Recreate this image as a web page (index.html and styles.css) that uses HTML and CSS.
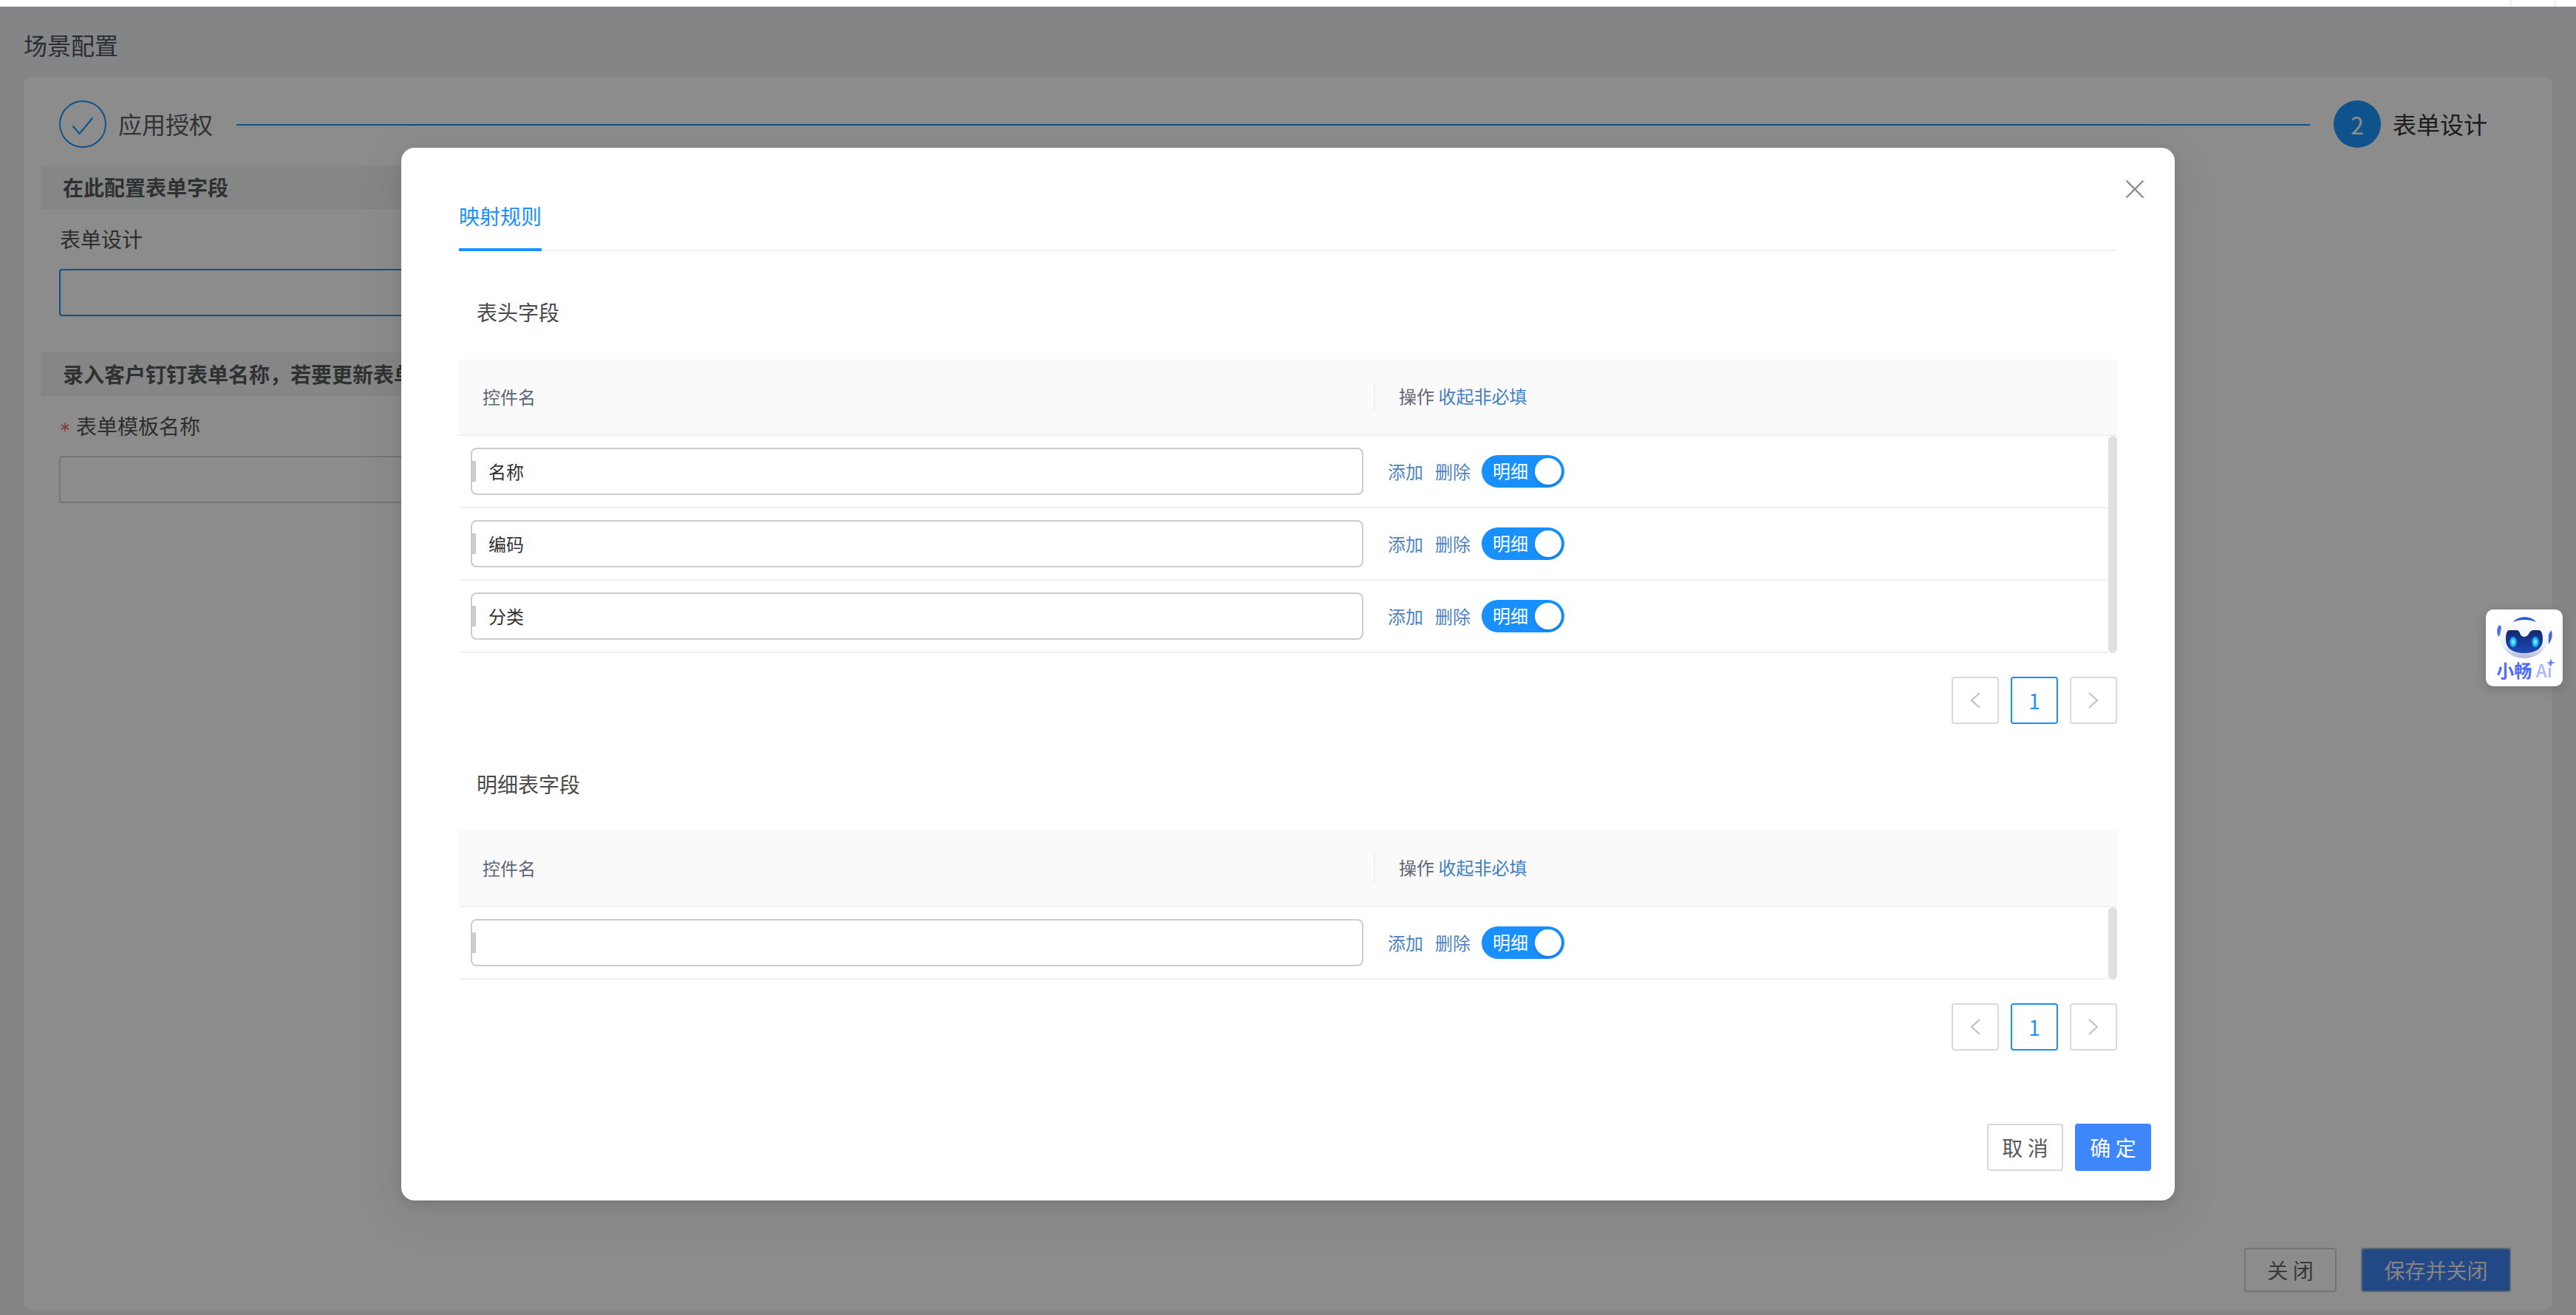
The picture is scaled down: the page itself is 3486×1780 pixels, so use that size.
FILE: index.html
```html
<!DOCTYPE html>
<html lang="zh-CN">
<head>
<meta charset="utf-8">
<title>场景配置</title>
<link rel="stylesheet" href="styles.css">
</head>
<body>
<div class="topbar"><span class="topcell"></span><span class="topcell last"></span></div>
<div class="app">
  <h1 class="page-title">场景配置</h1>
  <div class="panel">
    <div class="steps">
      <span class="step-icon">
        <svg width="30" height="25" viewBox="0 0 30 25"><path d="M1.5 12.5 L10.5 23 L28.5 1.5" fill="none" stroke="currentColor" stroke-width="2.2"/></svg>
      </span>
      <span class="step-text">应用授权</span>
      <span class="step-line"></span>
      <span class="step-num">2</span>
      <span class="step-text dark">表单设计</span>
    </div>
    <div class="strip first">在此配置表单字段</div>
    <div class="label">表单设计</div>
    <div class="field active"></div>
    <div class="strip second">录入客户钉钉表单名称，若要更新表单模板请重新录入</div>
    <div class="label req">
      <svg class="star" width="14" height="14" viewBox="0 0 14 14"><path d="M7 1 V13 M1.8 4 L12.2 10 M12.2 4 L1.8 10" stroke="#f56c6c" stroke-width="1.5" fill="none"/></svg>
      <span>表单模板名称</span>
    </div>
    <div class="field second-field"></div>
    <div class="panel-foot">
      <button class="pbtn">关 闭</button>
      <button class="pbtn primary">保存并关闭</button>
    </div>
  </div>

  <div class="mask"></div>

  <div class="modal">
    <svg class="close" width="26" height="26" viewBox="0 0 26 26"><path d="M1.5 1.5 L24.5 24.5 M24.5 1.5 L1.5 24.5" stroke="#8c8c8c" stroke-width="2.4" fill="none"/></svg>
    <div class="tabs"><span class="tab">映射规则</span></div>

    <div class="sec-title t1">表头字段</div>
    <div class="table">
      <div class="thead">
        <div class="th-name">控件名</div>
        <div class="th-act">操作 <span class="link">收起非必填</span></div>
      </div>
      <div class="tbody">
        <div class="rows">
          <div class="row">
            <div class="cell-name"><div class="inp"><i class="grip"></i>名称</div></div>
            <div class="cell-act"><span class="act">添加</span><span class="act">删除</span><span class="switch"><span class="sw-text">明细</span><i class="knob"></i></span></div>
          </div>
          <div class="row">
            <div class="cell-name"><div class="inp"><i class="grip"></i>编码</div></div>
            <div class="cell-act"><span class="act">添加</span><span class="act">删除</span><span class="switch"><span class="sw-text">明细</span><i class="knob"></i></span></div>
          </div>
          <div class="row">
            <div class="cell-name"><div class="inp"><i class="grip"></i>分类</div></div>
            <div class="cell-act"><span class="act">添加</span><span class="act">删除</span><span class="switch"><span class="sw-text">明细</span><i class="knob"></i></span></div>
          </div>
        </div>
        <div class="scroll"></div>
      </div>
    </div>
    <div class="pager">
      <span class="pg"><svg width="14" height="22" viewBox="0 0 14 22"><path d="M13 1 L2 11 L13 21" fill="none" stroke="#bfbfbf" stroke-width="2"/></svg></span>
      <span class="pg on">1</span>
      <span class="pg"><svg width="14" height="22" viewBox="0 0 14 22"><path d="M1 1 L12 11 L1 21" fill="none" stroke="#bfbfbf" stroke-width="2"/></svg></span>
    </div>

    <div class="sec-title t2">明细表字段</div>
    <div class="table">
      <div class="thead">
        <div class="th-name">控件名</div>
        <div class="th-act">操作 <span class="link">收起非必填</span></div>
      </div>
      <div class="tbody">
        <div class="rows">
          <div class="row">
            <div class="cell-name"><div class="inp"><i class="grip"></i></div></div>
            <div class="cell-act"><span class="act">添加</span><span class="act">删除</span><span class="switch"><span class="sw-text">明细</span><i class="knob"></i></span></div>
          </div>
        </div>
        <div class="scroll"></div>
      </div>
    </div>
    <div class="pager">
      <span class="pg"><svg width="14" height="22" viewBox="0 0 14 22"><path d="M13 1 L2 11 L13 21" fill="none" stroke="#bfbfbf" stroke-width="2"/></svg></span>
      <span class="pg on">1</span>
      <span class="pg"><svg width="14" height="22" viewBox="0 0 14 22"><path d="M1 1 L12 11 L1 21" fill="none" stroke="#bfbfbf" stroke-width="2"/></svg></span>
    </div>

    <div class="modal-foot">
      <button class="mbtn">取 消</button>
      <button class="mbtn ok">确 定</button>
    </div>
  </div>

  <div class="ai">
    <svg class="robot" width="104" height="66" viewBox="0 0 104 66">
      <defs>
        <linearGradient id="head" x1="0" y1="0" x2="0" y2="1"><stop offset="0" stop-color="#ffffff"/><stop offset=".7" stop-color="#eef1fb"/><stop offset="1" stop-color="#aeb6d6"/></linearGradient>
        <linearGradient id="visor" x1="0" y1="0" x2="0" y2="1"><stop offset="0" stop-color="#14296e"/><stop offset="1" stop-color="#1d49b8"/></linearGradient>
        <radialGradient id="eye"><stop offset="0" stop-color="#a8f6ff"/><stop offset=".6" stop-color="#1cc4f5"/><stop offset="1" stop-color="#1279d8"/></radialGradient>
      </defs>
      <path d="M18 21 C15 25 14 31 17 37 L20 33 L21 23 Z" fill="#4a74e8"/>
      <path d="M88 28 C91 33 90 40 85 47 L84 36 Z" fill="#3f68e0"/>
      <ellipse cx="52" cy="37" rx="33" ry="29" fill="url(#head)"/>
      <path d="M37 17 C43 8 62 8 68 17 C60 13 45 13 37 17 Z" fill="#2c5ad8"/>
      <path d="M32 28 H42 C47 28 45 37 52 37 C59 37 58 28 64 28 H71 C76 28 77 34 77 41 C77 52 68 59 52 59 C36 59 27 52 27 41 C27 34 28 28 32 28 Z" fill="url(#visor)"/>
      <ellipse cx="37" cy="44" rx="5" ry="7.5" fill="url(#eye)"/>
      <ellipse cx="67" cy="44" rx="5" ry="7.5" fill="url(#eye)"/>
    </svg>
    <div class="ai-text">小畅 <span>Ai</span></div>
    <svg class="ai-star" width="12" height="12" viewBox="0 0 12 12"><path d="M6 0 L7.3 4.7 L12 6 L7.3 7.3 L6 12 L4.7 7.3 L0 6 L4.7 4.7 Z" fill="#5a7cf5"/></svg>
  </div>
</div>
</body>
</html>
```

FILE: styles.css
```css
* { box-sizing: border-box; }
html, body { margin: 0; padding: 0; height: 1780px; overflow: hidden; }
body {
  width: 3486px;
  background: #fff;
  font-family: "Noto Sans CJK SC", "Noto Sans", sans-serif;
  color: #333;
}
.topbar { height: 9px; display: flex; justify-content: flex-end; background: #fff; }
.topcell { width: 60px; border-left: 2px solid #f0f0f0; }
.topcell.last { width: 29px; }

.app {
  position: relative;
  height: 1771px;
  background: #f1f2f5;
  display: flex;
  flex-direction: column;
  padding: 0 32px 7px;
}
.page-title {
  margin: 0;
  height: 95px;
  padding-top: 31px;
  font-size: 32px;
  line-height: 40px;
  font-weight: 400;
  color: #4d5560;
}
.panel {
  flex: 1;
  background: #fff;
  border-radius: 12px;
  padding: 32px 56px 24px 24px;
  display: flex;
  flex-direction: column;
}
.steps { display: flex; align-items: center; height: 64px; padding-left: 24px; }
.step-icon {
  width: 64px; height: 64px; border-radius: 50%;
  border: 2px solid #1c98ff; color: #1c98ff;
  display: flex; align-items: center; justify-content: center;
  padding-top: 4px;
}
.step-text { font-size: 32px; line-height: 40px; margin: -3px 0 0 16px; color: #5a5d62; }
.step-text.dark { color: #333; margin-right: 32px; }
.step-line { flex: 1; height: 2px; background: #1c98ff; margin: 2px 32px 0; }
.step-num {
  width: 64px; height: 64px; border-radius: 50%;
  background: #1c98ff; color: #fff;
  display: flex; align-items: center; justify-content: center;
  font-size: 32px;
}
.strip {
  width: 1900px;
  height: 59px;
  background: #f3f6f5;
  font-size: 28px;
  line-height: 59px;
  font-weight: 700;
  padding-left: 29px;
  color: #55585c;
  white-space: nowrap;
}
.strip.first { margin-top: 24px; }
.strip.second { margin-top: 49px; }
.label { margin: 20px 0 0 25px; font-size: 28px; line-height: 40px; color: #555; display: flex; align-items: center; }
.label.req { margin-top: 20px; }
.star { margin: 4px 8px 0 0; flex: none; }
.field {
  width: 1800px;
  height: 64px;
  margin: 21px 0 0 24px;
  border: 2px solid #d4d4d4;
  border-radius: 4px;
  background: #fff;
}
.field.active { border-color: #1c98ff; }
.field.second-field { margin-top: 21px; }
.panel-foot { margin-top: auto; display: flex; justify-content: flex-end; gap: 33px; }
.pbtn {
  height: 60px;
  width: 125px;
  background: #fff;
  border: 2px solid #d4d4d4;
  border-radius: 4px;
  font: 400 28px/1 "Noto Sans CJK SC", sans-serif;
  color: #666;
  padding: 0;
}
.pbtn.primary { width: 203px; background: #3f83f2; color: #f0f0f0; border-color: #a8b8d0; }

.mask { position: absolute; left: 0; top: 0; right: 0; bottom: 0; background: rgba(0,0,0,.45); }

.modal {
  position: absolute;
  left: 543px;
  top: 191px;
  width: 2400px;
  height: 1425px;
  background: #fff;
  border-radius: 18px;
  padding: 0 78px;
  box-shadow: 0 6px 16px rgba(0,0,0,.08), 0 3px 6px -4px rgba(0,0,0,.12), 0 18px 56px 16px rgba(0,0,0,.05);
}
.close { position: absolute; left: 2333px; top: 43px; }
.tabs { padding-top: 72px; border-bottom: 2px solid #f0f0f0; display: flex; }
.tab {
  font-size: 28px; line-height: 40px; color: #1890ff;
  padding: 0 0 24px; border-bottom: 4px solid #1890ff; margin-bottom: -2px;
}
.sec-title { font-size: 28px; line-height: 40px; color: #4a4a4a; padding-left: 24px; }
.sec-title.t1 { margin: 62px 0 44px; }
.sec-title.t2 { margin: 61px 0 43px; }
.thead {
  display: flex; align-items: center; height: 104px;
  background: #fafafa; border-bottom: 2px solid #f0f0f0;
  font-size: 24px; color: #5f6675;
}
.th-name { width: 1238px; padding-left: 32px; line-height: 40px; }
.th-act { border-left: 2px solid #f0f0f0; height: 38px; line-height: 36px; padding-left: 32px; }
.link { color: #3f7fc4; }
.tbody { display: flex; }
.rows { flex: 1; }
.row { display: flex; align-items: center; height: 98px; border-bottom: 2px solid #f0f0f0; }
.cell-name { width: 1240px; padding: 0 16px; }
.inp {
  position: relative;
  height: 64px;
  border: 2px solid #cccccc;
  border-radius: 8px;
  padding-left: 22px;
  font-size: 24px;
  line-height: 60px;
  color: #333;
}
.grip { position: absolute; left: -1px; top: 16px; width: 6px; height: 28px; background: #cccccc; }
.cell-act { display: flex; align-items: center; padding-left: 17px; }
.act { font-size: 24px; line-height: 40px; color: #4d85c4; margin-right: 16px; }
.switch {
  display: flex; align-items: center; justify-content: space-between;
  width: 112px; height: 44px; border-radius: 22px;
  background: #1890ff; padding: 0 4px 0 15px;
  color: #fff; font-size: 24px;
  margin-left: -1px;
}
.sw-text { line-height: 40px; margin-top: -3px; }
.knob { width: 36px; height: 36px; border-radius: 50%; background: #fff; box-shadow: 0 2px 4px rgba(0,35,11,.2); }
.scroll { width: 12px; background: #e0e0e0; border-radius: 6px; }
.pager { display: flex; justify-content: flex-end; gap: 16px; margin-top: 32px; }
.pg {
  width: 64px; height: 64px;
  border: 2px solid #d9d9d9; border-radius: 4px;
  display: flex; align-items: center; justify-content: center;
  font-size: 28px; color: #1890ff;
}
.pg.on { border-color: #1890ff; }
.modal-foot { position: absolute; right: 32px; bottom: 40px; display: flex; gap: 16px; }
.mbtn {
  width: 103px; height: 64px;
  border: 2px solid #d9d9d9; border-radius: 4px; background: #fff;
  font: 400 28px/1 "Noto Sans CJK SC", sans-serif; color: #595959; padding: 0;
}
.mbtn.ok { background: #3d87fb; border-color: #3d87fb; color: #fff; }

.ai {
  position: absolute;
  left: 3364px; top: 816px;
  width: 104px; height: 104px;
  background: #fff; border-radius: 10px;
  box-shadow: 0 4px 14px rgba(0,0,0,.15);
  display: flex; flex-direction: column; align-items: center;
}
.robot { flex: none; display: block; }
.ai-text {
  font-family: "Noto Sans CJK SC", sans-serif;
  font-size: 24px; line-height: 28px; font-weight: 700;
  color: #4f6ef7; white-space: nowrap; margin-top: 2px;
}
.ai-text span { color: #a9b8fb; font-weight: 500; }
.ai-star { position: absolute; left: 82px; top: 66px; }
```
